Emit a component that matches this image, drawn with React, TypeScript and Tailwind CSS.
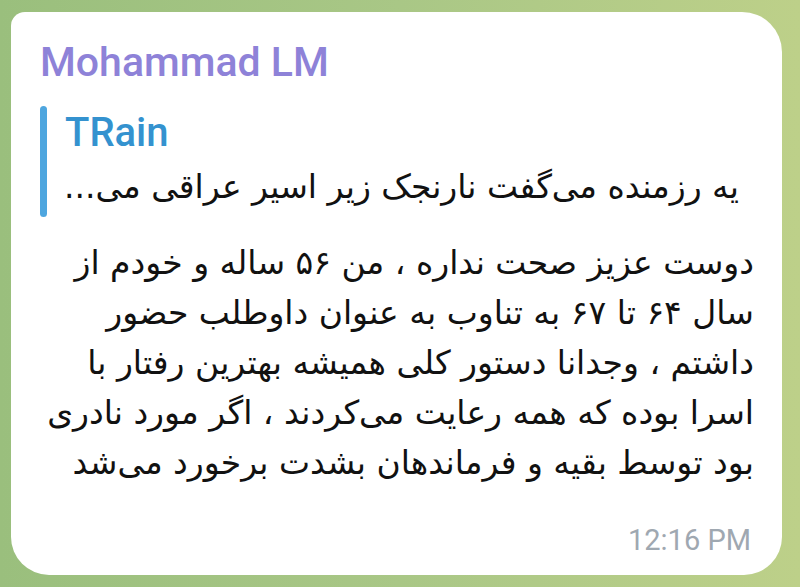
export default function App() {
  const lines = [
    "دوست عزیز صحت نداره ، من ۵۶ ساله و خودم از",
    "سال ۶۴ تا ۶۷ به تناوب به عنوان داوطلب حضور",
    "داشتم ، وجدانا دستور کلی همیشه بهترین رفتار با",
    "اسرا بوده که همه رعایت می‌کردند ، اگر مورد نادری",
    "بود توسط بقیه و فرماندهان بشدت برخورد می‌شد",
  ];

  return (
    <div className="w-[800px] h-[587px] overflow-hidden bg-gradient-to-r from-[#9abf7d] via-[#a9c786] to-[#bdd089] pt-[12px] pl-[11px]">
      <div className="w-[771px] h-[563px] bg-white rounded-tl-[14px] rounded-tr-[40px] rounded-b-[38px] pt-[33px] px-[29px] flex flex-col">
        <div className="font-['Roboto',sans-serif] font-medium text-[41px] leading-[34px] text-[#8e82d8]">
          Mohammad LM
        </div>

        <div className="mt-[27px] flex">
          <div className="w-[7px] h-[111px] shrink-0 rounded-full bg-[#4ea6df]" />
          <div className="flex-1 min-w-0 pl-[18px]">
            <div className="font-['Roboto',sans-serif] font-medium text-[40px] leading-[53px] text-[#3492cf]">
              TRain
            </div>
            <div dir="rtl" className="mt-[3px] font-['DejaVu_Sans',sans-serif] text-[33px] leading-[50px] text-[#111] text-right pr-[14px] whitespace-nowrap">
              یه رزمنده می‌گفت نارنجک زیر اسیر عراقی می...
            </div>
          </div>
        </div>

        <div dir="rtl" className="mt-[21px] font-['DejaVu_Sans',sans-serif] text-[33px] leading-[50px] text-[#111] -mr-[1px]">
          {lines.map((l, i) => (
            <div key={i} className="whitespace-nowrap">{l}</div>
          ))}
        </div>

        <div className="mt-auto mb-[13px] self-end pr-[2px] font-['Roboto',sans-serif] text-[29px] text-[#9fa8b1]">
          12:16 PM
        </div>
      </div>
    </div>
  );
}
